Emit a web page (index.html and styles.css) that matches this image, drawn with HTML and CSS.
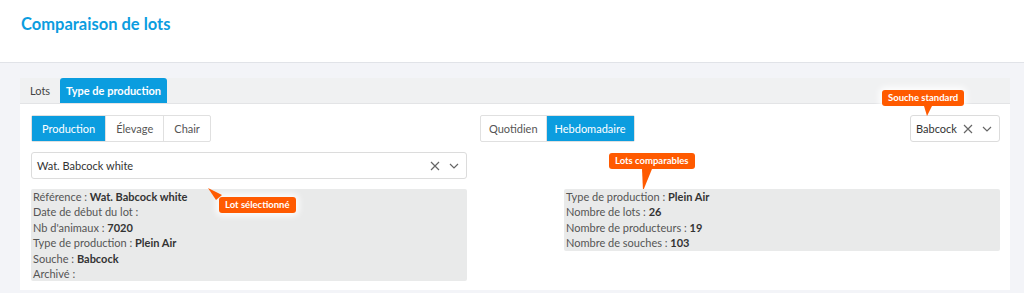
FILE: index.html
```html
<!DOCTYPE html>
<html lang="fr">
<head>
<meta charset="utf-8">
<link rel="stylesheet" href="styles.css">
</head>
<body>
<header class="page-header">
  <h1 class="title">Comparaison de lots</h1>
</header>
<main class="main">
  <section class="card">
    <nav class="tabs">
      <span class="tab">Lots</span>
      <span class="tab tab-active">Type de production</span>
    </nav>
    <div class="card-body">
      <div class="row-top">
        <div class="btn-group">
          <span class="btn btn-active">Production</span>
          <span class="btn">Élevage</span>
          <span class="btn">Chair</span>
        </div>
        <div class="btn-group period">
          <span class="btn">Quotidien</span>
          <span class="btn btn-active">Hebdomadaire</span>
        </div>
        <div class="select select-small">
          <span class="select-value">Babcock</span>
          <span class="select-icons">
            <svg class="ic-x" viewBox="0 0 10 10" width="10" height="10"><path d="M1 1L9 9M9 1L1 9" stroke="#666" stroke-width="1.2" fill="none"/></svg>
            <svg class="ic-chev" viewBox="0 0 10 6" width="10" height="6"><path d="M1 1L5 5L9 1" stroke="#666" stroke-width="1.2" fill="none"/></svg>
          </span>
          <div class="tip tip-souche">Souche standard
            <svg class="tip-arrow arrow-down" viewBox="0 0 10 10" width="10" height="10"><polygon points="0,0 8,0 3,10" fill="#ff5a00"/></svg>
          </div>
        </div>
      </div>
      <div class="row">
        <div class="select select-wide">
          <span class="select-value">Wat. Babcock white</span>
          <span class="select-icons">
            <svg class="ic-x" viewBox="0 0 10 10" width="10" height="10"><path d="M1 1L9 9M9 1L1 9" stroke="#666" stroke-width="1.2" fill="none"/></svg>
            <svg class="ic-chev" viewBox="0 0 10 6" width="10" height="6"><path d="M1 1L5 5L9 1" stroke="#666" stroke-width="1.2" fill="none"/></svg>
          </span>
        </div>
        <div class="tip tip-comp">Lots comparables
          <svg class="tip-arrow arrow-comp" viewBox="0 0 10 22" width="10" height="22"><polygon points="0,0 10,0 1,22" fill="#ff5a00"/></svg>
        </div>
      </div>
      <div class="row row-info">
        <div class="info">
          <div>Référence : <b>Wat. Babcock white</b></div>
          <div>Date de début du lot :</div>
          <div>Nb d'animaux : <b>7020</b></div>
          <div>Type de production : <b>Plein Air</b></div>
          <div>Souche : <b>Babcock</b></div>
          <div>Archivé :</div>
          <div class="tip tip-lot">Lot sélectionné
            <svg class="tip-arrow arrow-lot" viewBox="0 0 14 12" width="14" height="12"><polygon points="0,0 14,7 8,12" fill="#ff5a00"/></svg>
          </div>
        </div>
        <div class="info">
          <div>Type de production : <b>Plein Air</b></div>
          <div>Nombre de lots : <b>26</b></div>
          <div>Nombre de producteurs : <b>19</b></div>
          <div>Nombre de souches : <b>103</b></div>
        </div>
      </div>
    </div>
  </section>
</main>
</body>
</html>
```
FILE: styles.css
```css
* { box-sizing: border-box; }
html, body { margin: 0; padding: 0; }
body {
  background: #f3f4f8;
  font-family: Lato, "Open Sans", sans-serif;
  font-size: 11px;
  color: #444;
  height: 293px;
  overflow: hidden;
}
.page-header {
  background: #fff;
  height: 63px;
  border-bottom: 1px solid #e1e3e8;
  padding: 14px 21px 0;
}
.title {
  margin: 0;
  font-size: 16.5px;
  font-weight: 700;
  color: #0b9ddf;
}
.main {
  padding: 15px 14px 0 20px;
}
.card {
  width: 990px;
  background: #fff;
}
.tabs {
  display: flex;
  height: 26px;
  background: #f0f1f2;
  border-bottom: 1px solid #e3e4e6;
  align-items: stretch;
}
.tab {
  display: flex;
  align-items: center;
  padding: 0 10px;
  color: #444;
}
.tab-active {
  background: #0b9ddf;
  color: #fff;
  font-weight: 700;
  border-radius: 3px 3px 0 0;
  padding: 0 6px;
}
.card-body {
  padding: 11px 10px 9px 11px;
  display: flex;
  flex-direction: column;
  gap: 10px;
}
.row {
  display: flex;
  position: relative;
  align-items: stretch;
}
.row-top {
  display: grid;
  grid-template-columns: 449px 1fr auto;
  height: 27px;
}
.btn-group {
  display: flex;
  justify-self: start;
  border: 1px solid #e0e0e0;
  border-radius: 2px;
}
.btn {
  display: flex;
  align-items: center;
  padding: 0 10px;
  color: #555;
  border-left: 1px solid #e0e0e0;
}
.btn:first-child { border-left: 0; }
.period .btn { padding: 0 8px; }
.btn-active {
  background: #0b9ddf;
  color: #fff;
}
.select {
  display: flex;
  align-items: center;
  justify-content: space-between;
  border: 1px solid #dcdcdc;
  border-radius: 3px;
  padding: 0 7px 0 5px;
  color: #333;
  position: relative;
}
.select-small {
  width: 90px;
}
.select-wide {
  width: 436px;
  height: 27px;
}
.select-icons {
  display: flex;
  align-items: center;
  gap: 9px;
}
.row-info {
  justify-content: space-between;
  align-items: flex-start;
}
.info {
  width: 436px;
  background: #e9eaea;
  border-radius: 2px;
  padding: 0 2px;
  line-height: 15.4px;
  color: #555;
  position: relative;
}
.info b { color: #333; font-weight: 700; }
.tip {
  position: absolute;
  background: #ff5a00;
  color: #fff;
  font-weight: 700;
  font-size: 9.5px;
  line-height: 16px;
  height: 16px;
  padding: 0 6px;
  border-radius: 3px;
  white-space: nowrap;
  box-shadow: 0 0 6px 3px rgba(255,255,255,0.9);
}
.tip-arrow { position: absolute; display: block; }
.tip-souche { left: -29px; top: -26px; }
.arrow-down { left: 42px; top: 16px; }
.tip-comp { left: 578px; top: 1px; }
.arrow-comp { left: 33px; top: 16px; }
.tip-lot { left: 188px; top: 8px; }
.arrow-lot { left: -11px; top: -9px; }
```
